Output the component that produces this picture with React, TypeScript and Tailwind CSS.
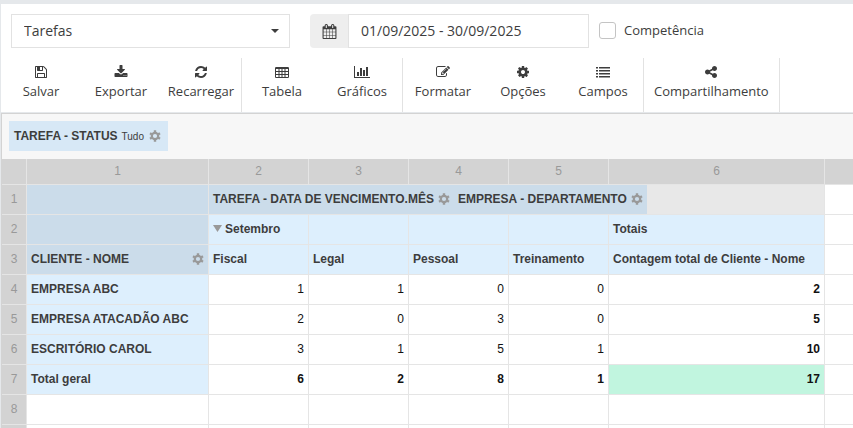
import React from 'react';

type IconProps = { path: string; width?: number; size?: string };

const icons = {
  save: 'M512 1536h768v-384h-768v384zm896 0h128v-896q0-14-10-38.5t-20-34.5l-281-281q-10-10-34-20t-39-10v416q0 40-28 68t-68 28h-576q-40 0-68-28t-28-68v-416h-128v1280h128v-416q0-40 28-68t68-28h832q40 0 68 28t28 68v416zm-384-928v-320q0-13-9.5-22.5t-22.5-9.5h-192q-13 0-22.5 9.5t-9.5 22.5v320q0 13 9.5 22.5t22.5 9.5h192q13 0 22.5-9.5t9.5-22.5zm640 32v928q0 40-28 68t-68 28h-1344q-40 0-68-28t-28-68v-1344q0-40 28-68t68-28h928q40 0 88 20t76 48l280 280q28 28 48 76t20 88z',
  download:
    'M1344 1344q0-26-19-45t-45-19-45 19-19 45 19 45 45 19 45-19 19-45zm256 0q0-26-19-45t-45-19-45 19-19 45 19 45 45 19 45-19 19-45zm128-224v320q0 40-28 68t-68 28h-1472q-40 0-68-28t-28-68v-320q0-40 28-68t68-28h465l135 136q58 56 136 56t136-56l136-136h464q40 0 68 28t28 68zm-325-569q17 41-14 70l-448 448q-18 19-45 19t-45-19l-448-448q-31-29-14-70 17-39 59-39h256v-448q0-26 19-45t45-19h256q26 0 45 19t19 45v448h256q42 0 59 39z',
  refresh:
    'M1639 1056q0 5-1 7-64 268-268 434.5t-478 166.5q-146 0-282.5-55t-243.5-157l-129 129q-19 19-45 19t-45-19-19-45v-448q0-26 19-45t45-19h448q26 0 45 19t19 45-19 45l-137 137q71 66 161 102t187 36q134 0 250-65t186-179q11-17 53-117 8-23 30-23h192q13 0 22.5 9.5t9.5 22.5zm25-800v448q0 26-19 45t-45 19h-448q-26 0-45-19t-19-45 19-45l138-138q-148-137-349-137-134 0-250 65t-186 179q-11 17-53 117-8 23-30 23h-199q-13 0-22.5-9.5t-9.5-22.5v-7q65-268 270-434.5t480-166.5q146 0 284 55.5t245 156.5l130-129q19-19 45-19t45 19 19 45z',
  table:
    'M160 256h1472q160 0 160 128v1152q0 128-160 128h-1472q-160 0-160-128v-1152q0-128 160-128zM128 512v256h320v-256zM576 512v256h256v-256zM960 512v256h256v-256zM1344 512v256h320v-256zM128 896v256h320v-256zM576 896v256h256v-256zM960 896v256h256v-256zM1344 896v256h320v-256zM128 1280v256h320v-256zM576 1280v256h256v-256zM960 1280v256h256v-256zM1344 1280v256h320v-256z',
  chart:
    'M640 896v512h-256v-512h256zm384-512v1024h-256v-1024h256zm1024 1152v128h-2048v-1536h128v1408h1920zm-640-896v768h-256v-768h256zm384-384v1152h-256v-1152h256z',
  edit: 'M888 1184l116-116-152-152-116 116v56h96v96h56zm440-720q-16-16-33 1l-350 350q-17 17-1 33t33-1l350-350q17-17 1-33zm80 594v190q0 119-84.5 203.5t-203.5 84.5h-832q-119 0-203.5-84.5t-84.5-203.5v-832q0-119 84.5-203.5t203.5-84.5h832q63 0 117 25 15 7 18 23 3 17-9 29l-49 49q-14 14-32 8-23-6-45-6h-832q-66 0-113 47t-47 113v832q0 66 47 113t113 47h832q66 0 113-47t47-113v-126q0-13 9-22l64-64q15-15 35-7t20 29zm-96-738l288 288-672 672h-288v-288zm444 132l-92 92-288-288 92-92q28-28 68-28t68 28l152 152q28 28 28 68t-28 68z',
  cog: 'M1152 896q0-106-75-181t-181-75-181 75-75 181 75 181 181 75 181-75 75-181zm512-109v222q0 12-8 23t-20 13l-185 28q-19 54-39 91 35 50 107 138 10 12 10 25t-9 23q-27 37-99 108t-94 71q-12 0-26-9l-138-108q-44 23-91 38-16 136-29 186-7 28-36 28h-222q-14 0-24.5-8.5t-11.5-21.5l-28-184q-49-16-90-37l-141 107q-10 9-25 9-14 0-25-11-126-114-165-168-7-10-7-23 0-12 8-23 15-21 51-66.5t54-70.5q-27-50-41-99l-183-27q-13-2-21-12.5t-8-23.5v-222q0-12 8-23t19-13l186-28q14-46 39-92-40-57-107-138-10-12-10-24 0-10 9-23 26-36 98.5-107.5t94.5-71.5q13 0 26 10l138 107q44-23 91-38 16-136 29-186 7-28 36-28h222q14 0 24.5 8.5t11.5 21.5l28 184q49 16 90 37l142-107q9-9 24-9 13 0 25 10 129 119 165 170 7 8 7 22 0 12-8 23-15 21-51 66.5t-54 70.5q26 50 41 98l183 28q13 2 21 12.5t8 23.5z',
  list: 'M0 256h256v192h-256zM384 256h1408v192h-1408zM0 640h256v192h-256zM384 640h1408v192h-1408zM0 1024h256v192h-256zM384 1024h1408v192h-1408zM0 1408h256v192h-256zM384 1408h1408v192h-1408z',
  share:
    'M1344 1024q133 0 226.5 93.5t93.5 226.5-93.5 226.5-226.5 93.5-226.5-93.5-93.5-226.5q0-12 2-34l-360-180q-92 86-218 86-133 0-226.5-93.5t-93.5-226.5 93.5-226.5 226.5-93.5q126 0 218 86l360-180q-2-22-2-34 0-133 93.5-226.5t226.5-93.5 226.5 93.5 93.5 226.5-93.5 226.5-226.5 93.5q-126 0-218-86l-360 180q2 22 2 34t-2 34l360 180q92-86 218-86z',
  calendar:
    'M192 1664h288v-288h-288v288zm352 0h320v-288h-320v288zm-352-352h288v-320h-288v320zm352 0h320v-320h-320v320zm-352-384h288v-288h-288v288zm736 736h320v-288h-320v288zm-384-736h320v-288h-320v288zm768 736h288v-288h-288v288zm-384-352h320v-320h-320v320zm-352-864v-288q0-13-9.5-22.5t-22.5-9.5h-64q-13 0-22.5 9.5t-9.5 22.5v288q0 13 9.5 22.5t22.5 9.5h64q13 0 22.5-9.5t9.5-22.5zm736 864h288v-320h-288v320zm-384-384h320v-288h-320v288zm384 0h288v-288h-288v288zm32-480v-288q0-13-9.5-22.5t-22.5-9.5h-64q-13 0-22.5 9.5t-9.5 22.5v288q0 13 9.5 22.5t22.5 9.5h64q13 0 22.5-9.5t9.5-22.5zm384-64v1280q0 52-38 90t-90 38h-1408q-52 0-90-38t-38-90v-1280q0-52 38-90t90-38h128v-96q0-66 47-113t113-47h64q66 0 113 47t47 113v96h384v-96q0-66 47-113t113-47h64q66 0 113 47t47 113v96h128q52 0 90 38t38 90z',
};

const Icon = ({ path, width = 1792, size = 'h-[14px]' }: IconProps) => (
  <svg viewBox={`0 0 ${width} 1792`} className={`${size} w-auto`} fill="currentColor" fillRule="evenodd" aria-hidden="true">
    <path d={path} />
  </svg>
);

const groups = [
  [
    { label: 'Salvar', icon: icons.save },
    { label: 'Exportar', icon: icons.download },
    { label: 'Recarregar', icon: icons.refresh },
  ],
  [
    { label: 'Tabela', icon: icons.table },
    { label: 'Gráficos', icon: icons.chart, width: 2048 },
  ],
  [
    { label: 'Formatar', icon: icons.edit },
    { label: 'Opções', icon: icons.cog },
    { label: 'Campos', icon: icons.list },
  ],
  [{ label: 'Compartilhamento', icon: icons.share }],
];

const rows = [
  { n: 4, name: 'EMPRESA ABC', values: [1, 1, 0, 0], total: 2 },
  { n: 5, name: 'EMPRESA ATACADÃO ABC', values: [2, 0, 3, 0], total: 5 },
  { n: 6, name: 'ESCRITÓRIO CAROL', values: [3, 1, 5, 1], total: 10 },
  { n: 7, name: 'Total geral', values: [6, 2, 8, 1], total: 17 },
];

const cell = 'h-[30px] border-r border-b border-[#e5e5e5] px-1 pt-0 pb-[2px] whitespace-nowrap';
const lastCell = 'h-[30px] border-b border-[#e5e5e5] p-0';
const head = `${cell} bg-[#ddeffd] text-left font-bold text-[#3d3d3d]`;
const dark = `${cell} bg-[#cbdcea] text-left font-bold text-[#3d3d3d]`;
const index = `${cell} bg-[#d3d3d3] text-center font-normal text-[#999]`;

const Gear = ({ label }: { label: string }) => (
  <button type="button" aria-label={label} className="text-[#999]">
    <svg viewBox="0 0 12 12" className="size-3" fill="none" stroke="currentColor" aria-hidden="true">
      <circle cx="6" cy="6" r="3.200" strokeWidth="2.200" />
      <path
        d="M6 0.300v2M6 9.700v2M1 3.200l1.700 1M9.300 7.800l1.700 1M1 8.800l1.700-1M9.300 4.200l1.700-1"
        strokeWidth="2.400"
      />
    </svg>
  </button>
);

const Toolbar = () => (
  <div className="flex">
    {groups.map((group, i) => (
      <div key={i} className="flex h-[54px] border-r border-[#e2e2e2]">
        {group.map((item) => (
          <button
            key={item.label}
            type="button"
            className={`flex flex-col items-center pt-[7px] text-[13px] leading-[18px] ${
              item.label === 'Compartilhamento' ? 'px-[10px]' : 'w-20'
            }`}
          >
            <Icon path={item.icon} width={'width' in item ? item.width : undefined} />
            <span className="mt-[3px]">{item.label}</span>
          </button>
        ))}
      </div>
    ))}
  </div>
);

const PivotTable = () => (
  <table className="w-full table-fixed border-separate border-spacing-0 text-xs">
    <colgroup>
      <col className="w-[25px]" />
      <col className="w-[182px]" />
      <col className="w-[100px]" />
      <col className="w-[100px]" />
      <col className="w-[100px]" />
      <col className="w-[100px]" />
      <col className="w-[216px]" />
      <col />
    </colgroup>
    <thead>
      <tr>
        {['', '1', '2', '3', '4', '5', '6'].map((n, i) => (
          <th
            key={i}
            className="h-[26px] border-r border-b border-[#e5e5e5] bg-[#d3d3d3] px-0 pt-0 pb-[2px] text-center font-normal text-[#999]"
          >
            {n}
          </th>
        ))}
        <th className="border-b border-[#e5e5e5] bg-[#d3d3d3]" />
      </tr>
    </thead>
    <tbody>
      <tr>
        <th className={index}>1</th>
        <th className={dark} />
        <th colSpan={5} className="h-[30px] border-r border-b border-[#e5e5e5] bg-[#e8e8e8] p-0 text-left text-[#3d3d3d]">
          <div className="flex">
            <div className="flex h-[29px] items-center gap-1 bg-[#cbdcea] px-1 pb-[2px] whitespace-nowrap">
              TAREFA - DATA DE VENCIMENTO.MÊS
              <Gear label="Filtrar mês" />
              <span className="ml-1">EMPRESA - DEPARTAMENTO</span>
              <Gear label="Filtrar departamento" />
            </div>
          </div>
        </th>
        <td className={lastCell} />
      </tr>
      <tr>
        <th className={index}>2</th>
        <th className={dark} />
        <th className={head}>
          <button type="button" className="flex items-center gap-[3px]">
            <svg viewBox="0 0 9 7" className="h-[7px] w-[9px]" fill="#999" aria-hidden="true">
              <path d="M0 0h9L4.500 7z" />
            </svg>
            Setembro
          </button>
        </th>
        <th className={head} />
        <th className={head} />
        <th className={head} />
        <th className={head}>Totais</th>
        <td className={lastCell} />
      </tr>
      <tr>
        <th className={index}>3</th>
        <th className={dark}>
          <div className="flex items-center justify-between">
            CLIENTE - NOME
            <Gear label="Filtrar cliente" />
          </div>
        </th>
        {['Fiscal', 'Legal', 'Pessoal', 'Treinamento', 'Contagem total de Cliente - Nome'].map((name) => (
          <th key={name} className={head}>
            {name}
          </th>
        ))}
        <td className={lastCell} />
      </tr>
      {rows.map((row) => (
        <tr key={row.n} className={row.n === 7 ? 'font-bold text-[#111]' : 'text-[#111]'}>
          <th className={index}>{row.n}</th>
          <th className={head}>{row.name}</th>
          {row.values.map((value, i) => (
            <td key={i} className={`${cell} text-right`}>
              {value}
            </td>
          ))}
          <td className={`${cell} text-right font-bold ${row.n === 7 ? 'bg-[#c1f5df]' : ''}`}>{row.total}</td>
          <td className={lastCell} />
        </tr>
      ))}
      {/* Empty grid rows */}
      {['8', ''].map((n) => (
        <tr key={n}>
          <th className={index}>{n}</th>
          {[1, 2, 3, 4, 5, 6].map((i) => (
            <td key={i} className={cell} />
          ))}
          <td className={lastCell} />
        </tr>
      ))}
    </tbody>
  </table>
);

const App = () => {
  return (
    <main className="h-screen overflow-hidden border-t-4 border-l border-[#e5e8eb] bg-white font-['Open_Sans',sans-serif] text-[#3d3d3d]">
      {/* Filters */}
      <div className="flex items-start px-[10px] pt-[10px] text-sm">
        <div className="relative w-[279px]">
          <select
            aria-label="Relatório"
            className="h-[34px] w-full appearance-none border border-[#e2e2e2] bg-white px-3"
            defaultValue="Tarefas"
          >
            <option>Tarefas</option>
          </select>
          <svg
            viewBox="0 0 8 4"
            className="pointer-events-none absolute top-[15px] right-[11px] h-1 w-2"
            fill="currentColor"
            aria-hidden="true"
          >
            <path d="M0 0h8L4 4z" />
          </svg>
        </div>
        <div className="ml-5 flex h-[34px] w-[279px]">
          <span className="flex w-[38px] items-center justify-center rounded-l bg-[#eee]">
            <Icon path={icons.calendar} size="h-[15px]" />
          </span>
          <input
            type="text"
            aria-label="Período"
            defaultValue="01/09/2025 - 30/09/2025"
            className="min-w-0 flex-1 border border-[#e2e2e2] px-3"
          />
        </div>
        <label className="ml-[10px] flex h-[32px] items-center gap-2 text-[13px]">
          <input type="checkbox" className="size-[17px] appearance-none rounded-[3px] border border-[#c4c4c4] bg-white" />
          Competência
        </label>
      </div>

      <div className="mt-[10px]">
        <Toolbar />
      </div>

      {/* Pivot */}
      <section className="border-t border-[#e5e8eb] font-['Liberation_Sans',sans-serif]">
        <div className="border-t border-l border-[#d3d3d3]">
          <div className="flex h-[45px] items-start bg-[#f7f7f7] px-[7px] pt-[7px]">
            <div className="flex h-[30px] items-center bg-[#d7e8f6] px-[5px] text-xs font-bold">
              TAREFA - STATUS
              <span className="ml-1 pt-[2px] text-[10px] font-normal">Tudo</span>
              <span className="mr-[2px] ml-[5px] flex">
                <Gear label="Filtrar status" />
              </span>
            </div>
          </div>
          <PivotTable />
        </div>
      </section>
    </main>
  );
};

export default App;
